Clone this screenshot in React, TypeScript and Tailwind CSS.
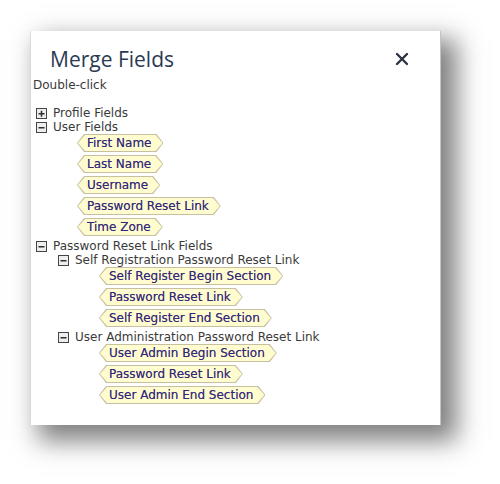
import React from "react";

const chipShape =
  "[clip-path:polygon(7px_0,calc(100%_-_7px)_0,100%_50%,calc(100%_-_7px)_100%,7px_100%,0_50%)]";

function Chip({ label }: { label: string }) {
  return (
    <div className="mb-[3px] flex h-[18px]">
      <span
        className={`relative inline-flex h-[18px] items-center bg-[#c6c0a0] pl-[10px] pr-[12px] ${chipShape}`}
      >
        <span
          className={`absolute inset-[1px] bg-[#fffdd0] ${chipShape}`}
        />
        <span className="relative text-[12px] leading-[14px] text-[#33287a] [text-shadow:0_0_0.2px_rgba(51,40,122,0.6)]">
          {label}
        </span>
      </span>
    </div>
  );
}

function Box({ plus }: { plus?: boolean }) {
  return (
    <svg width="11" height="11" viewBox="0 0 11 11" className="shrink-0">
      <rect x="0.5" y="0.5" width="10" height="10" fill="#eeeeee" stroke="#444" />
      <rect x="2.5" y="5" width="6" height="1.5" fill="#2f2f2f" />
      {plus && <rect x="4.75" y="2.75" width="1.5" height="6" fill="#2f2f2f" />}
    </svg>
  );
}

function Node({
  label,
  plus,
  children,
}: {
  label: string;
  plus?: boolean;
  children?: React.ReactNode;
}) {
  return (
    <div>
      <div className="flex h-[14px] items-center gap-[6px]">
        <Box plus={plus} />
        <span className="text-[12px] leading-[14px] text-[#3a3a3a]">{label}</span>
      </div>
      {children && <div className="pl-[22px]">{children}</div>}
    </div>
  );
}

function Chips({ items }: { items: string[] }) {
  return (
    <div className="pl-[19px]">
      {items.map((t) => (
        <Chip key={t} label={t} />
      ))}
    </div>
  );
}

export default function App() {
  return (
    <div
      className="h-[484px] w-[500px] overflow-hidden bg-white pl-[30px] pt-[31px]"
      style={{ fontFamily: '"DejaVu Sans", Verdana, sans-serif' }}
    >
      <div className="relative h-[394px] w-[411px] border-l border-r border-l-[#dadada] border-r-[#c4c4c4] bg-white shadow-[12px_12px_24px_4px_rgba(0,0,0,0.5)]">
        <div className="flex items-center justify-between pl-[19px] pr-[31px] pt-[14px]">
          <span
            className="text-[21px] leading-[28px] text-[#2b3a52]"
            style={{ fontFamily: '"Open Sans", "Noto Sans", sans-serif' }}
          >
            Merge Fields
          </span>
          <svg width="14" height="14" viewBox="0 0 14 14">
            <path
              d="M2 2 L12 12 M12 2 L2 12"
              stroke="#2b3444"
              strokeWidth="2.4"
              strokeLinecap="round"
            />
          </svg>
        </div>
        <div className="mt-[5px] pl-[2px] text-[12px] leading-[14px] text-[#3a3a3a]">
          Double-click
        </div>
        <div className="mt-[14px] pl-[5px]">
          <Node label="Profile Fields" plus />
          <div>
            <div className="flex h-[14px] items-center gap-[6px]">
              <Box />
              <span className="text-[12px] leading-[14px] text-[#3a3a3a]">User Fields</span>
            </div>
            <div className="pl-[22px]">
              <Chips
                items={[
                  "First Name",
                  "Last Name",
                  "Username",
                  "Password Reset Link",
                  "Time Zone",
                ]}
              />
            </div>
          </div>
          <Node label="Password Reset Link Fields">
            <Node label="Self Registration Password Reset Link">
              <Chips
                items={[
                  "Self Register Begin Section",
                  "Password Reset Link",
                  "Self Register End Section",
                ]}
              />
            </Node>
            <Node label="User Administration Password Reset Link">
              <Chips
                items={[
                  "User Admin Begin Section",
                  "Password Reset Link",
                  "User Admin End Section",
                ]}
              />
            </Node>
          </Node>
        </div>
      </div>
    </div>
  );
}
